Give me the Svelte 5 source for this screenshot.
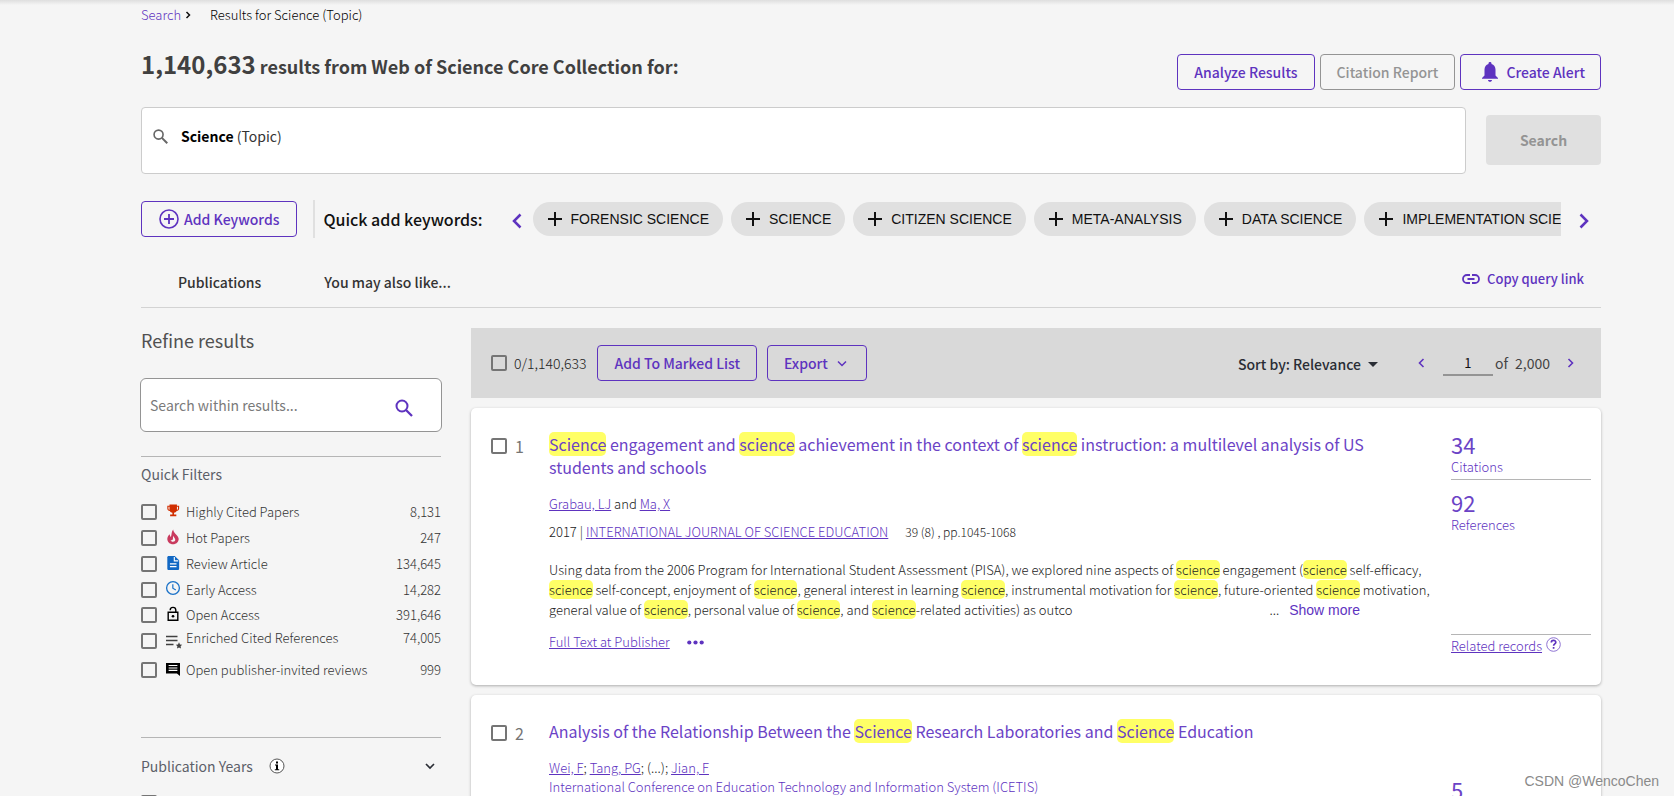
<script>
  const keywords = ['FORENSIC SCIENCE', 'SCIENCE', 'CITIZEN SCIENCE', 'META-ANALYSIS', 'DATA SCIENCE', 'IMPLEMENTATION SCIENCE'];
  const filters = [
    { id: 'highly-cited', label: 'Highly Cited Papers', count: '8,131' },
    { id: 'hot', label: 'Hot Papers', count: '247' },
    { id: 'review', label: 'Review Article', count: '134,645' },
    { id: 'early', label: 'Early Access', count: '14,282' },
    { id: 'open', label: 'Open Access', count: '391,646' },
    { id: 'enriched', label: 'Enriched Cited References', count: '74,005' },
    { id: 'reviews', label: 'Open publisher-invited reviews', count: '999' }
  ];
  const title1 = 'Science engagement and science achievement in the context of science instruction: a multilevel analysis of US students and schools';
  const title2 = 'Analysis of the Relationship Between the Science Research Laboratories and Science Education';
  const abstract =
    'Using data from the 2006 Program for International Student Assessment (PISA), we explored nine aspects of science engagement (science self-efficacy, science self-concept, enjoyment of science, general interest in learning science, instrumental motivation for science, future-oriented science motivation, general value of science, personal value of science, and science-related activities) as outco';
  const split = (text) => text.split(/(science)/i);
  let page = $state('1');
  let within = $state('');
</script>

{#snippet marked(text)}{#each split(text) as part}{#if part.toLowerCase() === 'science'}<mark>{part}</mark>{:else}{part}{/if}{/each}{/snippet}

{#snippet filterIcon(id)}
  {#if id === 'highly-cited'}
    <svg class="ficon" viewBox="0 0 16 16"><path fill="#d12e00" d="M4 .5h8.500V2H15v3c0 1.700-1.200 2.800-2.900 3-.5 1.100-1.600 1.900-2.900 2.100v2h2.600v1.800H4.700v-1.800h2.600v-2C6 9.900 4.900 9.100 4.400 8 2.700 7.800 1.500 6.700 1.500 5V2H4zM2.800 3.200V5c0 .8.500 1.400 1.200 1.600V3.200zm10.900 0h-1.200v3.400c.7-.2 1.200-.8 1.200-1.600z" /></svg>
  {:else if id === 'hot'}
    <svg class="ficon" viewBox="0 0 16 16"><path fill="#c93a5e" d="M8.200-.5c.4 2.500 1.200 3.600 3 5.300C13.300 6.900 14.500 8.500 14.500 10.400c0 3.500-2.900 6-6.500 6s-6.500-2.500-6.500-6c0-2.200.9-4.200 2.800-5.600 0 1.400.4 2.400 1.300 3.100C6.800 5.200 6 2 8.200-.5z" /><path fill="#f5f5f5" d="M8.300 6.500c.3 2 2.300 2.600 2.300 4.600 0 1.400-1.100 2.300-2.600 2.300-1.400 0-2.500-.8-2.700-2.100.8.600 1.700.5 2.200-.1.900-1 .100-2.800.8-4.700z" /></svg>
  {:else if id === 'review'}
    <svg class="ficon" viewBox="0 0 16 16"><path fill="#1168c4" d="M3 0h7l5 4.800v9.700c0 .9-.6 1.500-1.500 1.500H3c-.9 0-1.500-.7-1.500-1.500v-13C1.500.7 2.100 0 3 0z" /><path stroke="#fff" stroke-width="1.300" fill="none" d="M9.500 1.200V5.500H14M4.500 9h7.500M4.500 12.200h7.500" /></svg>
  {:else if id === 'early'}
    <svg class="ficon" viewBox="0 0 16 16"><circle cx="8" cy="8" r="7.300" fill="none" stroke="#1b72c8" stroke-width="1.500" /><path d="M7.800 3.700v4.600l3.400 2" fill="none" stroke="#1b72c8" stroke-width="1.400" /></svg>
  {:else if id === 'open'}
    <svg class="ficon" viewBox="0 0 16 16"><path d="M2.500 6h11v9.200h-11zM4.800 3.700A3.200 3.200 0 0 1 11.200 3.500V6" fill="none" stroke="#000" stroke-width="1.600" /><circle cx="8" cy="10.600" r="1.500" /></svg>
  {:else if id === 'enriched'}
    <svg class="ficon wide" viewBox="0 0 16 16"><path d="M0 3.500h11.500M0 7.500h11.500M0 11.500h7.500" stroke="#404040" stroke-width="1.600" /><path fill="#404040" d="m13 9.300 1 2.100 2.200.3-1.600 1.600.4 2.200-2-1.100-2 1.100.4-2.200-1.600-1.600 2.200-.3z" /></svg>
  {:else}
    <svg class="ficon" viewBox="0 0 16 16"><path d="M0 1h16v15l-3.500-3H0z" /><path d="M3 4h10M3 6.800h10M3 9.600h10" stroke="#fff" stroke-width="1.300" /></svg>
  {/if}
{/snippet}

<div class="page">
  <nav class="crumbs" aria-label="Breadcrumb">
    <a href="#search">Search</a>
    <svg width="6" height="8" viewBox="0 0 6 8"><path d="M1.500 1l3 3-3 3" fill="none" stroke="#111" stroke-width="1.500" /></svg>
    <span class="here">Results for Science (Topic)</span>
  </nav>

  <header class="head">
    <h1><span class="total">1,140,633</span> results from Web of Science Core Collection for:</h1>
    <div class="actions">
      <button class="btn">Analyze Results</button>
      <button class="btn" disabled>Citation Report</button>
      <button class="btn bell">
        <svg width="16" height="20" viewBox="0 0 16 20"><path fill="#5e33bf" d="M8 0c.9 0 1.500.6 1.500 1.400v.5C12 2.600 13.500 4.800 13.500 7.500v6L16 16v.8H0V16l2.500-2.500v-6c0-2.700 1.500-4.900 4-5.600v-.5C6.500.6 7.100 0 8 0zM6 18h4c0 1.100-.9 1.800-2 1.800S6 19.100 6 18z" /></svg>
        Create Alert
      </button>
    </div>
  </header>

  <div class="query">
    <div class="querybox">
      <svg width="15" height="15" viewBox="0 0 14 14"><circle cx="5.200" cy="5.200" r="4.200" fill="none" stroke="#666" stroke-width="1.500" /><path d="M8.300 8.300l5 5" stroke="#666" stroke-width="1.900" /></svg>
      <span><b>Science</b> (Topic)</span>
    </div>
    <button class="go" disabled>Search</button>
  </div>

  <div class="keywords">
    <button class="btn add">
      <svg width="20" height="20" viewBox="0 0 20 20"><path d="M10 5v10M5 10h10" stroke="#5e33bf" stroke-width="1.800" /><circle cx="10" cy="10" r="9" fill="none" stroke="#5e33bf" stroke-width="1.600" /></svg>
      Add Keywords
    </button>
    <div class="quick">Quick add keywords:</div>
    <button class="arrow" aria-label="Previous keywords"><svg width="10" height="16" viewBox="0 0 10 16"><path d="M8.500 1.500L2 8l6.500 6.500" fill="none" stroke="#5e33bf" stroke-width="2.500" /></svg></button>
    <div class="chips">
      {#each keywords as word}
        <button class="chip"><svg width="14" height="14" viewBox="0 0 14 14"><path d="M7 0v14M0 7h14" stroke="#111" stroke-width="2" /></svg>{word}</button>
      {/each}
    </div>
    <button class="arrow" aria-label="Next keywords"><svg width="10" height="16" viewBox="0 0 10 16"><path d="M1.500 1.500L8 8l-6.500 6.500" fill="none" stroke="#5e33bf" stroke-width="2.500" /></svg></button>
  </div>

  <nav class="tabs" aria-label="Result views">
    <a href="#publications">Publications</a>
    <a href="#related">You may also like...</a>
    <button class="copy">
      <svg width="18" height="10" viewBox="0 0 18 10"><path d="M8 1H5a4 4 0 0 0 0 8h3M10 1h3a4 4 0 0 1 0 8h-3M5.500 5h7" fill="none" stroke="#5e33bf" stroke-width="1.800" /></svg>
      Copy query link
    </button>
  </nav>

  <div class="columns">
    <aside>
      <h2>Refine results</h2>
      <div class="within">
        <input type="text" placeholder="Search within results..." aria-label="Search within results" bind:value={within} />
        <button aria-label="Search within results">
          <svg width="18" height="18" viewBox="0 0 18 18"><circle cx="7" cy="7" r="5.500" fill="none" stroke="#5e33bf" stroke-width="2" /><path d="M11 11l6 6" stroke="#5e33bf" stroke-width="2.300" /></svg>
        </button>
      </div>
      <section class="facet">
        <h3>Quick Filters</h3>
        <ul>
          {#each filters as f}
            <li class={f.id}>
              <input type="checkbox" id={f.id} />
              {@render filterIcon(f.id)}
              <label for={f.id}>{f.label}</label>
              <span>{f.count}</span>
            </li>
          {/each}
        </ul>
      </section>
      <section class="facet years">
        <h3>
          Publication Years
          <svg width="16" height="16" viewBox="0 0 16 16"><circle cx="8" cy="8" r="7" fill="#fff" stroke="#555" stroke-width="1" /><path d="M7 3.500h2v2H7zM6 6.500h3v4.800h1.200v1H5.800v-1H7V7.500H6z" /></svg>
          <button aria-label="Toggle publication years"><svg width="10" height="8" viewBox="0 0 10 8"><path d="M1 2l4 4 4-4" fill="none" stroke="#2a2d35" stroke-width="1.700" /></svg></button>
        </h3>
        <input type="checkbox" aria-label="Publication year" />
      </section>
    </aside>

    <main>
      <div class="toolbar">
        <input type="checkbox" id="all" />
        <label for="all">0/1,140,633</label>
        <button class="btn">Add To Marked List</button>
        <button class="btn export">Export <svg width="10" height="8" viewBox="0 0 10 8"><path d="M1 2.500l4 4 4-4" fill="none" stroke="#5e33bf" stroke-width="1.500" /></svg></button>
        <div class="sort">
          <label for="sort">Sort by:</label>
          <select id="sort"><option>Relevance</option></select>
          <svg width="10" height="5" viewBox="0 0 10 5"><path d="M0 0h10L5 5z" fill="#2a2d35" /></svg>
        </div>
        <div class="pager">
          <button aria-label="Previous page"><svg width="7" height="10" viewBox="0 0 7 10"><path d="M5.500 1l-4 4 4 4" fill="none" stroke="#5e33bf" stroke-width="1.600" /></svg></button>
          <input type="text" aria-label="Page" bind:value={page} />
          <span>of</span><span class="pages">2,000</span>
          <button aria-label="Next page"><svg width="7" height="10" viewBox="0 0 7 10"><path d="M1.500 1l4 4-4 4" fill="none" stroke="#5e33bf" stroke-width="1.600" /></svg></button>
        </div>
      </div>

      <article class="card">
        <div class="pick"><input type="checkbox" id="r1" /><label for="r1">1</label></div>
        <div class="body">
          <h2><a href="#r1">{@render marked(title1)}</a></h2>
          <p class="authors"><a href="#a">Grabau, LJ</a> and <a href="#b">Ma, X</a></p>
          <p class="source"><span>2017 | <a href="#j">INTERNATIONAL JOURNAL OF SCIENCE EDUCATION</a></span><span class="issue">39 (8) , pp.1045-1068</span></p>
          <div class="abstract">
            <p>{@render marked(abstract)}</p>
            <div class="more"><span>...</span><button>Show more</button></div>
          </div>
          <p class="full"><a href="#full">Full Text at Publisher</a><button aria-label="More options"><svg width="17" height="5" viewBox="0 0 17 5"><g fill="#5e33bf"><circle cx="2.300" cy="2.500" r="2.100" /><circle cx="8.500" cy="2.500" r="2.100" /><circle cx="14.700" cy="2.500" r="2.100" /></g></svg></button></p>
        </div>
        <div class="stats">
          <a class="num" href="#c">34</a><a class="cap" href="#c">Citations</a>
          <hr />
          <a class="num" href="#ref">92</a><a class="cap" href="#ref">References</a>
          <div class="related"><a href="#rel">Related records</a>
            <svg width="15" height="15" viewBox="0 0 15 15"><circle cx="7.500" cy="7.500" r="6.800" fill="#fff" stroke="#8f74d3" stroke-width="1" /><path d="M5.300 5.600c0-3 4.500-2.900 4.500-.3 0 1.600-2.200 1.600-2.200 3.500M7.600 10v1.800" fill="none" stroke="#5e33bf" stroke-width="1.700" /></svg>
          </div>
        </div>
      </article>

      <article class="card second">
        <div class="pick"><input type="checkbox" id="r2" /><label for="r2">2</label></div>
        <div class="body">
          <h2><a href="#r2">{@render marked(title2)}</a></h2>
          <p class="authors"><a href="#w">Wei, F</a>; <a href="#t">Tang, PG</a>; (...); <a href="#ji">Jian, F</a></p>
          <p class="conf"><a href="#conf">International Conference on Education Technology and Information System (ICETIS)</a></p>
        </div>
        <div class="stats"><a class="num" href="#c2">5</a></div>
      </article>
    </main>
  </div>
  <div class="watermark">CSDN @WencoChen</div>
</div>

<style>
  :global(body) { background: #f5f5f5; }
  .page {
    position: relative;
    box-sizing: border-box;
    height: 100vh;
    overflow: hidden;
    padding: 0 73px 0 141px;
    background: linear-gradient(#dedede, #f5f5f5 5px);
    font: 300 13px/20px "Noto Sans CJK SC", sans-serif;
    color: #222;
  }
  h1, h2, h3, p, ul { margin: 0; padding: 0; font-weight: inherit; }
  a { color: #5e33bf; }
  button { margin: 0; padding: 0; border: 0; background: none; font: inherit; color: #5e33bf; cursor: pointer; }
  svg { flex: none; display: block; }
  input[type="checkbox"] {
    appearance: none;
    box-sizing: border-box;
    flex: none;
    width: 16px;
    height: 16px;
    margin: 0;
    border: 2px solid #757575;
    border-radius: 2px;
  }
  .btn {
    box-sizing: border-box;
    display: flex;
    align-items: center;
    height: 36px;
    padding: 0 16px;
    border: 1px solid #5e33bf;
    border-radius: 4px;
    font-size: 14px;
    font-weight: 500;
    white-space: nowrap;
  }
  .btn:disabled { border-color: #949494; color: #949494; }

  .crumbs { display: flex; align-items: center; height: 29px; box-sizing: border-box; color: #000; }
  .crumbs a { text-decoration: none; }
  .crumbs svg { margin-left: 4px; }
  .here { margin-left: 19px; }

  .head { display: flex; justify-content: space-between; padding-top: 25px; height: 36px; }
  h1 { margin-top: -2px; font-size: 18px; line-height: 24px; font-weight: 700; color: #404040; }
  .total { font-size: 24px; }
  .actions { display: flex; gap: 5px; }
  .bell { gap: 8px; padding-left: 21px; padding-right: 15px; }

  .query { display: flex; align-items: center; gap: 20px; margin-top: 17px; }
  .querybox {
    flex: 1;
    box-sizing: border-box;
    display: flex;
    gap: 13px;
    height: 67px;
    padding: 18px 11px;
    border: 1px solid #ccc;
    border-radius: 4px;
    background: #fff;
    color: #333;
    font-size: 14px;
    font-weight: 400;
  }
  .querybox svg { margin-top: 3px; }
  .querybox b { color: #000; font-weight: 700; }
  .go { width: 115px; height: 50px; margin-bottom: 1px; border-radius: 4px; background: #e0e0e0; color: #949494; font-size: 14px; font-weight: 700; }

  .keywords { display: flex; align-items: center; margin-top: 25px; height: 40px; }
  .add { gap: 5px; padding-left: 17px; padding-right: 17px; }
  .quick { margin-left: 16px; padding-left: 8px; border-left: 2px solid #e0e0e0; line-height: 38px; font-size: 16px; font-weight: 500; color: #111; white-space: nowrap; }
  .arrow { padding: 4px 11px 0 29px; }
  .chips { flex: 1; display: flex; gap: 8px; overflow: hidden; }
  .chip {
    flex: none;
    display: flex;
    align-items: center;
    gap: 9px;
    height: 34px;
    padding: 0 14px 0 15px;
    border-radius: 17px;
    background: #e0e0e0;
    color: #111;
    font-family: "Liberation Sans", Arial, sans-serif;
    font-size: 14px;
    font-weight: 400;
  }
  .chips + .arrow { padding: 4px 12px 0 18px; }

  .tabs { display: flex; align-items: center; height: 68px; border-bottom: 1px solid #d3d3d3; padding: 0 17px 0 37px; }
  .tabs a { margin-right: 63px; color: #333; font-size: 14px; font-weight: 500; text-decoration: none; padding-top: 18px; }
  .copy { display: flex; align-items: center; gap: 7px; margin-left: auto; padding-top: 11px; font-weight: 500; }

  .columns { display: grid; grid-template-columns: 300px minmax(0, 1fr); gap: 30px; padding-top: 20px; }
  h2, h3 { font-weight: 400; }
  aside h2 { font-size: 18px; line-height: 24px; color: #505050; }
  .within {
    box-sizing: border-box;
    display: flex;
    align-items: center;
    height: 54px;
    margin: 26px -1px 0;
    padding: 0 28px 0 9px;
    border: 1px solid #949494;
    border-radius: 6px;
    background: #fff;
  }
  .within input { flex: 1; min-width: 0; border: 0; padding: 0; background: none; font: inherit; font-size: 14px; font-weight: 400; outline: 0; }
  .within input::placeholder { color: #7a7a7a; }
  .within button { padding-top: 6px; }
  .facet { margin-top: 24px; border-top: 1px solid #b5b5b5; }
  h3 { display: flex; align-items: center; padding-top: 7px; font-size: 14px; line-height: 20px; color: #5c5f69; }
  ul { list-style: none; padding-top: 15px; color: #333; }
  li { display: flex; align-items: center; height: 26px; }
  li label { margin-left: 6px; }
  li span { margin-left: auto; }
  li.early { height: 25px; }
  li.enriched label, li.enriched span { padding-bottom: 6px; }
  li.reviews { height: 32px; }
  .ficon { width: 14px; height: 14px; margin: 0 0 3px 9px; overflow: visible; }
  .ficon.wide { width: 16px; height: 16px; margin-bottom: 0; }
  .wide + label { margin-left: 4px; }
  .years { margin-top: 51px; }
  .years h3 { padding-top: 18px; }
  .years h3 svg { margin-left: 16px; }
  .years h3 button { margin-left: auto; padding-right: 6px; }
  .years input { display: block; margin-top: 19px; }

  .toolbar { display: flex; align-items: center; height: 70px; padding: 0 27px 0 20px; background: #d9d9d9; box-sizing: border-box; }
  .toolbar > label { margin: 0 11px 0 7px; }
  .toolbar > label, .pager, .sort { font-size: 14px; }
  .export { margin-left: 10px; gap: 9px; padding-right: 19px; }
  .sort { display: flex; align-items: center; margin-left: auto; padding-top: 2px; font-weight: 500; color: #2a2d35; }
  .sort select { appearance: none; margin: 0 7px 0 3px; padding: 0; border: 0; background: none; font: inherit; color: inherit; }
  .pager { display: flex; align-items: center; margin-left: 40px; font-weight: 400; color: #444; }
  .pager input { width: 50px; box-sizing: border-box; margin: 0 2px 0 18px; padding: 3px 0 1px; border: 0; border-bottom: 2px solid #949494; background: none; font: inherit; font-size: 13px; text-align: center; color: #111; }
  .pages { margin: 0 17px 0 7px; }

  .card {
    display: grid;
    grid-template-columns: 58px minmax(0, 1fr) 140px;
    box-sizing: border-box;
    height: 277px;
    margin-top: 10px;
    padding: 25px 10px 0 20px;
    border-radius: 5px;
    background: #fff;
    box-shadow: 0 1px 3px rgba(0, 0, 0, 0.3);
  }
  .pick { display: flex; gap: 8px; padding-top: 5px; height: 16px; line-height: 16px; font-size: 16px; font-weight: 400; color: #757575; }
  .card h2 { font-size: 16px; line-height: 23px; padding-right: 60px; }
  .card h2 a, .num { color: #6b43c6; }
  .card h2 a, .conf a, .num, .cap { text-decoration: none; }
  mark { border-radius: 5px; background: #ff6; color: inherit; }
  .authors { margin-top: 15px; }
  .source { display: flex; gap: 17px; margin-top: 8px; }
  .issue { font-size: 12px; }
  .abstract { margin-top: 18px; padding-right: 12px; }
  .more { display: flex; justify-content: flex-end; gap: 10px; height: 20px; margin-top: -20px; padding-right: 79px; }
  .more button { font-family: "Liberation Sans", Arial, sans-serif; font-size: 14px; font-weight: 400; }
  .full { display: flex; align-items: center; gap: 17px; margin-top: 12px; }
  .stats { display: flex; flex-direction: column; }
  .num { font-size: 22px; line-height: 22px; font-weight: 400; }
  .cap { line-height: 23px; }
  .stats hr { width: 100%; margin: 1px 0 11px; border: 0; border-top: 1px solid #b5b5b5; }
  .related { display: flex; gap: 4px; margin-top: 98px; border-top: 1px solid #b5b5b5; line-height: 22px; }
  .related svg { margin-top: 2px; }
  .second .stats { padding-top: 58px; }
  .second .conf { margin-top: -1px; }
  .watermark { position: absolute; right: 15px; bottom: 5px; font: 14px/20px "Liberation Sans", Arial, sans-serif; color: #8a8a8a; }
</style>
